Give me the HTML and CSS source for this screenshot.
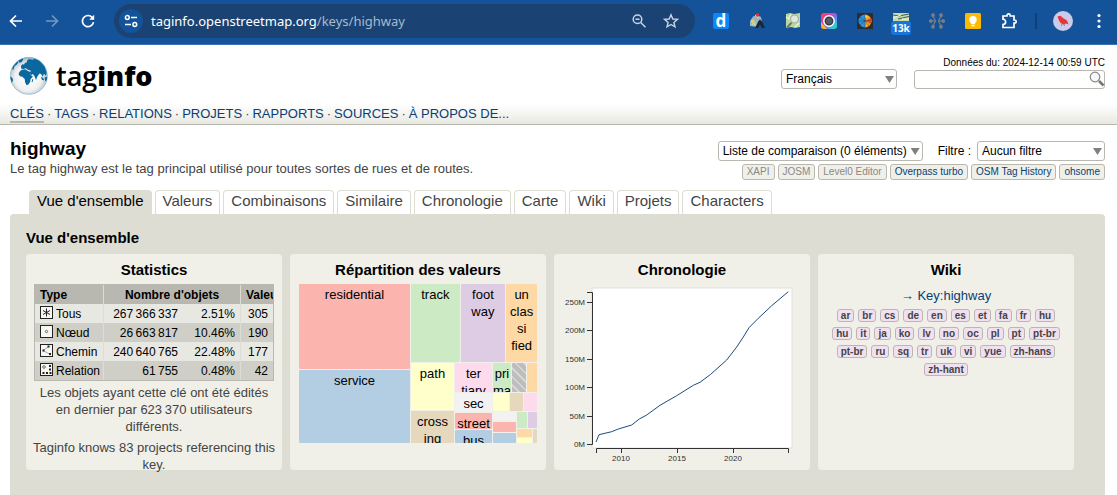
FILE: index.html
```html
<!DOCTYPE html>
<html lang="fr">
<head>
<meta charset="UTF-8" />
<meta name="viewport" content="width=device-width, initial-scale=1" />
<title>highway | Taginfo</title>
<link rel="stylesheet" href="styles.css">
</head>
<body>

<div class="browser">
  <button class="icon-btn" aria-label="Back">
    <svg viewBox="0 0 16 16"><path d="M14 8H3M8 2.5L2.5 8L8 13.5" fill="none" stroke="#fff" stroke-width="1.7"/></svg>
  </button>
  <button class="icon-btn dim" aria-label="Forward">
    <svg viewBox="0 0 16 16"><path d="M2 8H13M8 2.5L13.5 8L8 13.5" fill="none" stroke="#fff" stroke-width="1.7"/></svg>
  </button>
  <button class="icon-btn" aria-label="Reload">
    <svg viewBox="0 0 16 16"><path d="M13.5 9.2A5.6 5.6 0 1 1 12.3 4.5L13.5 6" fill="none" stroke="#fff" stroke-width="1.7"/><path d="M14.2 1.8V6.8H9.2Z" fill="#fff"/></svg>
  </button>
  <div class="urlbar">
    <button class="site-info" aria-label="Site information">
      <svg viewBox="0 0 16 16" fill="none" stroke="#fff" stroke-width="1.5"><circle cx="4.3" cy="4.5" r="1.9"/><path d="M8 4.5H14M2 11.5H8"/><circle cx="11.8" cy="11.5" r="1.9"/></svg>
    </button>
    <span class="url">taginfo.openstreetmap.org<span>/keys/highway</span></span>
    <button class="icon-btn" aria-label="Zoom">
      <svg viewBox="0 0 16 16" fill="none" stroke="#c7d3e2" stroke-width="1.5"><circle cx="6.5" cy="6.2" r="4.3"/><path d="M9.7 9.5L14.5 14.3M4.5 6.2H8.5"/></svg>
    </button>
    <button class="icon-btn" aria-label="Bookmark">
      <svg viewBox="0 0 16 16" fill="none" stroke="#c7d3e2" stroke-width="1.4"><path d="M8 1.8L9.8 6L14.4 6.4L10.9 9.4L12 13.9L8 11.5L4 13.9L5.1 9.4L1.6 6.4L6.2 6Z"/></svg>
    </button>
  </div>
  <div class="extensions">
    <button class="icon-btn ext-d" aria-label="Extension">d</button>
    <button class="icon-btn" aria-label="Extension">
      <svg viewBox="0 0 16 16"><path d="M1 13V8L4 3.5L8 2L12 4L13 9L8 14Z" fill="#9bb4bd"/><path d="M2 12L5 7L8 13Z" fill="#b9d5a0"/><circle cx="3.5" cy="8" r="1.5" fill="#f0c96a"/><path d="M6 2L10 5" stroke="#dde" stroke-width="1"/><circle cx="8.5" cy="2" r="1.7" fill="#e2382f"/><path d="M6 15L9.5 8L11 6.5L13 8.5L16 15H13L11 11.5L9 15Z" fill="#1c2530"/></svg>
    </button>
    <button class="icon-btn" aria-label="Extension">
      <svg viewBox="0 0 16 16"><path d="M1 1L5 0L9 1L15 0V14L10 15L6 14L1 15Z" fill="#b9d8a0"/><path d="M1 4L6 7L4 14M6 1L4 5M10 14L14 10" stroke="#eef3df" stroke-width="1.3" fill="none"/><path d="M6.5 9.5L2 15" stroke="#74785c" stroke-width="2"/><circle cx="9.5" cy="6" r="4" fill="#dcebd7" stroke="#a9afa8" stroke-width="1.2"/></svg>
    </button>
    <button class="icon-btn" aria-label="Extension">
      <svg viewBox="0 0 16 16">
        <defs><linearGradient id="rainbow" x1="0" y1="0" x2="1" y2="1"><stop offset="0" stop-color="#f5483c"/><stop offset=".3" stop-color="#f03b9c"/><stop offset=".55" stop-color="#7b6cf0"/><stop offset=".8" stop-color="#2fc4e8"/><stop offset="1" stop-color="#45d68a"/></linearGradient></defs>
        <rect width="16" height="16" rx="3" fill="url(#rainbow)"/><path d="M0 9L6 16H3A3 3 0 0 1 0 13Z" fill="#ffad25"/><circle cx="8" cy="8" r="5.2" fill="#363c44" stroke="#fff" stroke-width="1.5"/><circle cx="8" cy="8" r="3" fill="#555c65"/>
      </svg>
    </button>
    <button class="icon-btn" aria-label="Extension">
      <svg viewBox="0 0 16 16"><rect width="16" height="16" fill="#2d2c2e"/><path d="M8 1.5A6.5 6.5 0 0 0 8 14.5Z" fill="#2596e6"/><path d="M8 1.5A6.5 6.5 0 0 1 8 14.5Z" fill="#f5a623"/><path d="M8 8L14 5A6.5 6.5 0 0 1 14 11Z" fill="#e84a27"/><path d="M8 2V14M3 4L8 8L3 12M2 8H8M10 2L8 8L12 13M8 8L14 7" stroke="#3c3b44" stroke-width=".5" fill="none"/><path d="M8 2L11 3L9 6Z" fill="#f7d92f"/></svg>
    </button>
    <button class="icon-btn counter" aria-label="Extension">
      <svg viewBox="0 0 16 16"><rect width="16" height="16" fill="#c5dcae"/><path d="M0 2L6 3L16 1M5 6L16 3.5" stroke="#4d5b4f" stroke-width="1.2" fill="none"/><path d="M0 5L8 2M9 6L16 6" stroke="#eff4e6" stroke-width="1"/></svg>
      <span class="count">13k</span>
    </button>
    <button class="icon-btn" aria-label="Extension">
      <svg viewBox="0 0 16 16" fill="#7a7d84" stroke="#7a7d84"><path d="M4.500 4L6.500 8L4.500 12M2 8H6.500M11.500 4L9.500 8L11.500 12M14 8H9.500" fill="none" stroke-width="1.2"/><ellipse cx="4" cy="2.300" rx="1.400" ry="1.700"/><ellipse cx="12" cy="2.300" rx="1.400" ry="1.700"/><circle cx="1.800" cy="8" r="1.500"/><circle cx="14.200" cy="8" r="1.500"/><ellipse cx="4" cy="13.700" rx="1.400" ry="1.700"/><ellipse cx="12" cy="13.700" rx="1.400" ry="1.700"/></svg>
    </button>
    <button class="icon-btn" aria-label="Extension">
      <svg viewBox="0 0 16 16"><rect width="16" height="16" rx="1.5" fill="#fdba04"/><circle cx="8" cy="6.8" r="3.7" fill="#fff"/><path d="M6 9H10V11.2H6ZM6.3 12H9.7V13.2H6.3Z" fill="#fff"/></svg>
    </button>
    <button class="icon-btn" aria-label="Extensions">
      <svg viewBox="0 0 16 16" fill="none" stroke="#fff" stroke-width="1.7"><path d="M2 3H6V2.500A1.600 1.600 0 0 1 9.200 2.500V3H13V7H13.600A1.500 1.500 0 0 1 13.600 10.200H13V14.500H2V11.500A2.500 2.500 0 0 0 2 6.200Z"/></svg>
    </button>
  </div>
  <span class="separator"></span>
  <button class="avatar" aria-label="Profile">
    <svg viewBox="0 0 20 20"><circle cx="10" cy="10" r="10" fill="#c9cbe8"/><path d="M4.5 5.5L7.5 4.8L10 7L14 9.5L15.5 13.5L13 12.5L10.500 13.500L7.500 12L5.800 9Z" fill="#e83338"/><path d="M9 13L8.5 15M11 13L11.5 15" stroke="#80607c" stroke-width=".7"/></svg>
  </button>
  <button class="icon-btn" aria-label="Menu">
    <svg viewBox="0 0 16 16" fill="#fff"><circle cx="8" cy="2.5" r="1.6"/><circle cx="8" cy="8" r="1.6"/><circle cx="8" cy="13.5" r="1.6"/></svg>
  </button>
</div>

<header class="header">
  <div class="header-top">
    <a class="logo" href="#">
      <svg viewBox="18 17 111 111">
        <defs>
          <radialGradient id="sphere" cx=".48" cy=".55" r=".55"><stop offset="0" stop-color="#fff"/><stop offset=".65" stop-color="#f0f1f2"/><stop offset=".88" stop-color="#c5ccd0"/><stop offset="1" stop-color="#6fb0cd"/></radialGradient>
          <clipPath id="disc"><circle cx="73" cy="72" r="54"/></clipPath>
        </defs>
        <circle cx="73" cy="72" r="54" fill="url(#sphere)" stroke="#78b4cd" stroke-width="2"/>
        <g clip-path="url(#disc)" fill="#0a689f">
          <path d="M50 43L54 38L59 39L62 34L68 32L67 28L74 23L84 25L90 22L104 28L119 45L125 62L123 72L117 66L113 75L109 67L104 65L98 74L94 84L90 74L85 67L80 70L76 63L79 57L70 54L64 50L58 52L51 51Z"/>
          <path d="M46 60L52 54L63 53L69 57L76 60L79 70L85 74L78 82L77 90L71 98L66 99L62 91L61 81L54 75L47 73L43 67Z"/>
          <path d="M24 53L27 43L39 30L43 31L39 38L31 44L28 54Z"/>
          <path d="M42 27L52 21L57 24L51 32L46 34Z"/>
          <path d="M18 75L24 77L27 84L23 93L18 88Z"/>
          <path d="M108 75L115 78L118 85L112 84ZM119 77L128 74L127 85L121 88Z"/>
          <path d="M83 82L86 81L84 90L81 91Z"/>
        </g>
      </svg>
      <span class="wordmark">tag<b>info</b></span>
    </a>
    <div class="tools">
      <span class="select lang">
        <select aria-label="Langue"><option>Français</option></select>
      </span>
      <div class="search-box">
        <span class="data-until">Données du: 2024-12-14 00:59 UTC</span>
        <div class="search">
          <input type="text" aria-label="Recherche">
          <svg viewBox="0 0 16 16"><circle cx="6" cy="6" r="4.8" fill="#f8f8f8" stroke="#88888a" stroke-width="1.2"/><path d="M10 10L14.5 14.5" stroke="#77777a" stroke-width="2.6"/></svg>
        </div>
      </div>
    </div>
  </div>
  <nav class="menu">
    <a class="current" href="#">CLÉS</a> · <a href="#">TAGS</a> · <a href="#">RELATIONS</a> · <a href="#">PROJETS</a> · <a href="#">RAPPORTS</a> · <a href="#">SOURCES</a> · <a href="#">À PROPOS DE...</a>
  </nav>
</header>

<main class="page">
  <div class="title-row">
    <div>
      <h1>highway</h1>
      <p>Le tag highway est le tag principal utilisé pour toutes sortes de rues et de routes.</p>
    </div>
    <div class="page-tools">
      <div class="filters">
        <span class="select comparison">
          <select aria-label="Comparaison"><option>Liste de comparaison (0 éléments)</option></select>
        </span>
        <label for="filter">Filtre :</label>
        <span class="select filter">
          <select id="filter"><option>Aucun filtre</option></select>
        </span>
      </div>
      <div class="external">
        <button disabled>XAPI</button>
        <button disabled>JOSM</button>
        <button disabled>Level0 Editor</button>
        <button>Overpass turbo</button>
        <button>OSM Tag History</button>
        <button>ohsome</button>
      </div>
    </div>
  </div>

  <nav class="tabs">
    <a class="active" href="#">Vue d'ensemble</a>
    <a href="#">Valeurs</a>
    <a href="#">Combinaisons</a>
    <a href="#">Similaire</a>
    <a href="#">Chronologie</a>
    <a href="#">Carte</a>
    <a href="#">Wiki</a>
    <a href="#">Projets</a>
    <a href="#">Characters</a>
  </nav>

  <section class="panel">
    <h2>Vue d'ensemble</h2>
    <div class="cards">

      <div class="card">
        <h3>Statistics</h3>
        <table class="stats">
          <colgroup><col class="col-type"><col class="col-num"><col class="col-pct"><col></colgroup>
          <thead>
            <tr><th class="type">Type</th><th class="objects" colspan="2">Nombre d'objets</th><th class="values">Valeurs</th></tr>
          </thead>
          <tbody>
            <tr>
              <td><svg viewBox="0 0 13 13"><rect x=".5" y=".5" width="12" height="12"/><path d="M6.5 2.5V10.5M3 4.5L10 8.5M10 4.5L3 8.5"/></svg>Tous</td>
              <td class="num">267&#8201;366&#8201;337</td><td class="pct">2.51%</td><td class="val">305</td>
            </tr>
            <tr>
              <td><svg viewBox="0 0 13 13"><rect x=".5" y=".5" width="12" height="12"/><circle cx="6.5" cy="6.5" r="1.2" stroke="#587a58"/></svg>Nœud</td>
              <td class="num">26&#8201;663&#8201;817</td><td class="pct">10.46%</td><td class="val">190</td>
            </tr>
            <tr>
              <td><svg viewBox="0 0 13 13"><rect x=".5" y=".5" width="12" height="12"/><path d="M8.5 3L3 6.5L9.5 10" stroke="#aaa"/><path d="M7.5 2.5H9.5M2.5 6.5H4.5M9 10H11" stroke-width="2"/></svg>Chemin</td>
              <td class="num">240&#8201;640&#8201;765</td><td class="pct">22.48%</td><td class="val">177</td>
            </tr>
            <tr>
              <td><svg viewBox="0 0 13 13"><rect x=".5" y=".5" width="12" height="12"/><circle cx="4" cy="4" r="1.3" stroke="#587a58"/><path d="M9 3H11M9 6.5H11M2.5 10H4.5M6 10H8M9.500 10H11.5" stroke-width="2"/></svg>Relation</td>
              <td class="num">61&#8201;755</td><td class="pct">0.48%</td><td class="val">42</td>
            </tr>
          </tbody>
        </table>
        <p>Les objets ayant cette clé ont été édités en dernier par 623&#8201;370 utilisateurs différents.</p>
        <p>Taginfo knows 83 projects referencing this key.</p>
      </div>

      <div class="card">
        <h3>Répartition des valeurs</h3>
        <div class="treemap">
          <div class="col" style="flex-grow: 111">
            <div class="cell red" style="flex-grow: 85">residential</div>
            <div class="cell blue" style="flex-grow: 73">service</div>
          </div>
          <div class="col" style="flex-grow: 126">
            <div class="row" style="flex-grow: 78">
              <div class="cell green" style="flex-grow: 49">track</div>
              <div class="cell purple" style="flex-grow: 45">foot<br>way</div>
              <div class="cell orange" style="flex-grow: 31">un<br>clas<br>si<br>fied</div>
            </div>
            <div class="row" style="flex-grow: 80">
              <div class="col" style="flex-grow: 43">
                <div class="cell yellow" style="flex-grow: 47">path</div>
                <div class="cell tan" style="flex-grow: 32">cross<br>ing</div>
              </div>
              <div class="col" style="flex-grow: 37">
                <div class="cell pink" style="flex-grow: 29">ter<br>tiary</div>
                <div class="cell grey" style="flex-grow: 19">sec</div>
                <div class="cell red" style="flex-grow: 16">street</div>
                <div class="cell blue" style="flex-grow: 13">bus</div>
              </div>
              <div class="col" style="flex-grow: 44">
                <div class="row" style="flex-grow: 29">
                  <div class="cell green" style="flex-grow: 18">pri<br>ma</div>
                  <div class="cell hatched" style="flex-grow: 14"></div>
                  <div class="cell orange" style="flex-grow: 10"></div>
                </div>
                <div class="row" style="flex-grow: 19">
                  <div class="cell yellow" style="flex-grow: 16"></div>
                  <div class="cell tan" style="flex-grow: 13"></div>
                  <div class="cell pink" style="flex-grow: 13"></div>
                </div>
                <div class="row" style="flex-grow: 31">
                  <div class="col" style="flex-grow: 23">
                    <div class="cell grey" style="flex-grow: 9"></div>
                    <div class="cell red" style="flex-grow: 10"></div>
                    <div class="cell blue" style="flex-grow: 10"></div>
                  </div>
                  <div class="col" style="flex-grow: 20">
                    <div class="row" style="flex-grow: 16">
                      <div class="cell green" style="flex-grow: 10"></div>
                      <div class="cell purple" style="flex-grow: 9"></div>
                    </div>
                    <div class="row" style="flex-grow: 14">
                      <div class="col" style="flex-grow: 15">
                        <div class="cell orange" style="flex-grow: 8"></div>
                        <div class="cell yellow" style="flex-grow: 6"></div>
                      </div>
                      <div class="cell tan" style="flex-grow: 4"></div>
                    </div>
                  </div>
                </div>
              </div>
            </div>
          </div>
        </div>
      </div>

      <div class="card">
        <h3>Chronologie</h3>
        <svg class="chart" viewBox="0 0 240 186">
          <rect class="plot" x="30" y="4" width="200" height="160"/>
          <path class="axis" d="M25 8.5H30.5V160.5H25M25 18.5H30M25 46.5H30M25 75.5H30M25 103.5H30M25 132.5H30"/>
          <path class="axis" d="M34.5 169V164.5H226.5V169M59.5 164.5V169M115.5 164.5V169M171.5 164.5V169"/>
          <g text-anchor="end">
            <text x="23" y="21">250M</text>
            <text x="23" y="49">200M</text>
            <text x="23" y="78">150M</text>
            <text x="23" y="106">100M</text>
            <text x="23" y="135">50M</text>
            <text x="23" y="163">0M</text>
          </g>
          <g text-anchor="middle">
            <text x="59" y="177">2010</text>
            <text x="115" y="177">2015</text>
            <text x="171" y="177">2020</text>
          </g>
          <path class="line" d="M34 158L37 150.7L49.7 147.7L56.3 145L69.7 141L77.3 135L84.700 131L98 121.3L114.7 111.7L131.3 101.3L138 98.3L148.7 90.3L164.7 76L174.7 63L181.3 53L187 43.7L196.3 34.3L209.7 21.7L226.3 7.700"/>
        </svg>
      </div>

      <div class="card">
        <h3>Wiki</h3>
        <a class="wiki-link" href="#">→ Key:highway</a>
        <div class="langs">
          <a href="#">ar</a><a href="#">br</a><a href="#">cs</a><a href="#">de</a><a href="#">en</a><a href="#">es</a><a href="#">et</a><a href="#">fa</a><a href="#">fr</a><a href="#">hu</a>
          <a href="#">hu</a><a href="#">it</a><a href="#">ja</a><a href="#">ko</a><a href="#">lv</a><a href="#">no</a><a href="#">oc</a><a href="#">pl</a><a href="#">pt</a><a href="#">pt-br</a>
          <a href="#">pt-br</a><a href="#">ru</a><a href="#">sq</a><a href="#">tr</a><a href="#">uk</a><a href="#">vi</a><a href="#">yue</a><a href="#">zh-hans</a>
          <a href="#">zh-hant</a>
        </div>
      </div>

    </div>
  </section>
</main>

</body>
</html>
```
FILE: styles.css
```css
:root {
  --link: #083e76;
  --text: #444;
  --panel: #ddddd4;
  --card: #f0f0e8;
  --border: #b8b8b0;
  --browser: #14539a;
}
* {
  box-sizing: border-box;
}
body {
  margin: 0;
  font: 13px/17px "Liberation Sans", Arial, sans-serif;
  color: var(--text);
  background: white;
}
h1, h2, h3, p {
  margin: 0;
}
h1, h2, h3 {
  color: black;
}
a {
  color: var(--link);
  text-decoration: none;
}
button {
  font-family: inherit;
  border: none;
  padding: 0;
  background: none;
}
svg {
  display: block;
}

/* browser toolbar */
.browser {
  display: flex;
  align-items: center;
  height: 45px;
  padding: 0 10px 2px 8px;
  background: var(--browser);
  border-bottom: 1px solid #3c73b0;
}
.icon-btn {
  flex: none;
  width: 16px;
  height: 16px;
  margin-right: 20px;
}
.icon-btn:last-child {
  margin-right: 0;
}
.dim {
  opacity: .4;
}
.urlbar {
  flex: 1;
  display: flex;
  align-items: center;
  height: 34px;
  margin-right: 18px;
  padding: 0 16px 0 5px;
  border-radius: 17px;
  background: #1a4373;
}
.browser > .icon-btn:nth-child(3) {
  margin-right: 18px;
}
.urlbar .icon-btn + .icon-btn {
  margin-right: 0;
}
.site-info {
  width: 24px;
  height: 24px;
  padding: 4px;
  border-radius: 12px;
  background: var(--browser);
}
.url {
  flex: 1;
  margin-left: 8px;
  font: 13px/18px "Noto Sans", sans-serif;
  color: white;
}
.url span {
  color: #a9b9cd;
}
.urlbar .icon-btn {
  margin-right: 16px;
}
.extensions {
  display: flex;
}
.ext-d {
  border-radius: 2px;
  background: #0c86fa;
  color: white;
  font: bold 17px/14px "Open Sans", sans-serif;
}
.counter {
  position: relative;
}
.count {
  position: absolute;
  left: -2px;
  top: 8px;
  width: 20px;
  border-radius: 3px;
  background: #1976d8;
  color: white;
  font: bold 10px/14px "Noto Sans", sans-serif;
}
.separator {
  width: 2px;
  height: 16px;
  margin: 0 16px 0 18px;
  background: #123f76;
}
.avatar {
  width: 20px;
  height: 20px;
  margin-right: 18px;
}

/* site header */
.header {
  padding: 12px 12px 0 10px;
  border-bottom: 1px solid var(--border);
  background: linear-gradient(white, #e8e8e2) bottom / 100% 20px no-repeat;
}
.header-top {
  display: flex;
  justify-content: space-between;
  height: 48px;
}
.logo {
  display: flex;
  align-items: flex-start;
  gap: 8px;
  color: black;
}
.logo svg {
  width: 38px;
  height: 38px;
}
.wordmark {
  font: 600 27px/38px "Open Sans", sans-serif;
}
.wordmark b {
  font-weight: 800;
}
.tools {
  display: flex;
  align-items: flex-start;
  gap: 17px;
}
.search-box {
  width: 191px;
}
.data-until {
  display: block;
  height: 13px;
  font-size: 10px;
  line-height: 12px;
  text-align: right;
  color: black;
}
.search {
  position: relative;
}
.search input {
  display: block;
  width: 100%;
  height: 19px;
  border: 1px solid var(--border);
  border-radius: 3px;
}
.search svg {
  position: absolute;
  right: 0;
  top: 1px;
  width: 16px;
  height: 16px;
}
.menu {
  display: flex;
  gap: 3px;
  height: 19px;
  line-height: 17px;
}
.menu .current {
  height: 18px;
  border-bottom: 2px solid var(--border);
}

/* drop-downs */
.select {
  position: relative;
  display: block;
}
.select select {
  display: block;
  appearance: none;
  width: 100%;
  height: 20px;
  padding: 0 4px;
  border: 1px solid var(--border);
  border-radius: 3px;
  background: white;
  color: black;
  font: 12px "Liberation Sans", Arial, sans-serif;
}
.select::after {
  content: "";
  position: absolute;
  right: 3px;
  top: 7px;
  width: 9px;
  height: 7px;
  background: #808080;
  clip-path: polygon(0 0, 100% 0, 50% 100%);
}
.lang {
  width: 116px;
  margin-top: 12px;
}
.comparison {
  width: 205px;
}
.filter {
  width: 128px;
}

/* page title and tools */
.page {
  padding: 13px 12px 0 10px;
}
.title-row {
  display: flex;
  justify-content: space-between;
  height: 52px;
}
h1 {
  font-size: 19px;
  line-height: 22px;
}
.page-tools {
  display: flex;
  flex-direction: column;
  align-items: flex-end;
  gap: 3px;
  padding-top: 3px;
}
.filters {
  display: flex;
  align-items: center;
}
.filters label {
  margin: 0 6px 0 15px;
  font-size: 12px;
  color: black;
}
.external {
  display: flex;
  gap: 3px;
}
.external button {
  height: 16px;
  padding: 0 4px;
  border: 1px solid var(--border);
  border-radius: 3px;
  background: var(--card);
  color: var(--link);
  font-size: 10px;
  line-height: 14px;
}
.external button:disabled {
  color: #888;
}

.tabs {
  display: flex;
  gap: 3px;
  padding-left: 19px;
}
.tabs a {
  height: 24px;
  padding: 0 7px;
  border: 1px solid var(--panel);
  border-bottom: none;
  border-radius: 4px 4px 0 0;
  color: var(--text);
  font-size: 15px;
  line-height: 20px;
}
.tabs .active {
  background: var(--panel);
  color: black;
}

/* overview panel */
.panel {
  padding: 15px 16px 25px;
  border-radius: 4px 4px 0 0;
  background: var(--panel);
}
h2, h3 {
  font-size: 15px;
  line-height: 18px;
}
h2 {
  margin-bottom: 7px;
}
.cards {
  display: flex;
  flex-wrap: wrap;
  gap: 8px;
}
.card {
  width: 256px;
  height: 216px;
  padding: 7px 8px;
  border-radius: 4px;
  background: var(--card);
  text-align: center;
}
h3 {
  margin-bottom: 5px;
}

.stats {
  width: 100%;
  margin-bottom: 3px;
  table-layout: fixed;
  border: 1px solid var(--border);
  border-spacing: 0;
  color: black;
  font-size: 12px;
}
.col-type {
  width: 69px;
}
.col-num {
  width: 74px;
}
.col-pct {
  width: 63px;
}
.stats th, .stats td {
  height: 19px;
  padding: 0 5px;
  line-height: 18px;
  white-space: nowrap;
  overflow: hidden;
}
.stats th {
  background: var(--border);
}
.stats th.values {
  padding-right: 0;
}
.stats th:first-child, .stats td:first-child {
  text-align: left;
}
.stats td:first-child, .stats .pct, .stats .type, .stats .objects {
  border-right: 1px solid var(--panel);
}
.stats .num, .stats .pct, .stats .val {
  padding: 0 5px;
  text-align: right;
}
.stats .num {
  padding: 0;
}
.stats tbody tr {
  background: #e8e8e3;
}
.stats tbody tr:nth-child(even) {
  background: #cfcfc7;
}
.stats svg {
  display: inline-block;
  width: 13px;
  height: 13px;
  margin-right: 3px;
  vertical-align: -1px;
  fill: #f6f6f2;
  stroke: #222;
}
.card p {
  margin: 0 -2px 4px;
}

.treemap {
  display: flex;
  gap: 1px;
  height: 159px;
  margin: 0 1px;
}
.treemap .row, .treemap .col {
  display: flex;
  gap: 1px;
  flex-basis: 0;
  min-width: 0;
  min-height: 0;
}
.treemap .col {
  flex-direction: column;
}
.cell {
  flex-basis: 0;
  min-width: 0;
  min-height: 0;
  border-radius: 1px;
  overflow: hidden;
  color: black;
}
/* top inset kept out of the padding so cell sizes stay proportional */
.cell:not(:empty)::before {
  content: "";
  display: block;
  height: 2px;
}
.red { background: #fbb4ae; }
.blue { background: #b3cde3; }
.green { background: #ccebc5; }
.purple { background: #decbe4; }
.orange { background: #fed9a6; }
.yellow { background: #ffffcc; }
.tan { background: #e5d8bd; }
.pink { background: #fddaec; }
.grey { background: #f2f2f2; }
.hatched {
  background: repeating-linear-gradient(45deg, #bdbdbd 0 4px, #d6d6d6 4px 6px);
}

.chart {
  width: 100%;
}
.chart text {
  fill: #333;
  font-size: 8px;
}
.plot {
  fill: white;
  stroke: #e0e0d8;
}
.axis {
  fill: none;
  stroke: #333;
}
.line {
  fill: none;
  stroke: #1d4a80;
}

.wiki-link {
  display: block;
  margin: 8px 0 5px;
}
.langs {
  display: flex;
  flex-wrap: wrap;
  justify-content: center;
  gap: 5px 4px;
  padding: 0 2px;
}
.langs a {
  height: 13px;
  padding: 0 3px;
  border: 1px solid #bdb5b5;
  border-radius: 3px;
  background: #f0e0f0;
  color: var(--text);
  font-size: 10px;
  font-weight: bold;
  line-height: 11px;
}
```
